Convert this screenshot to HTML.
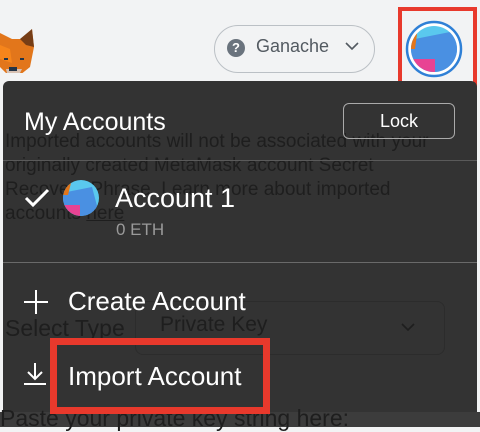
<!DOCTYPE html>
<html><head><style>
body{margin:0;width:480px;height:427px;overflow:hidden;background:#f2f3f4;font-family:"Liberation Sans",sans-serif;position:relative}
.a{position:absolute;white-space:nowrap}
.bg{color:#1e1e1e;font-size:19px}
.w{color:#fff}
</style></head><body>
<svg class="a" style="left:0;top:25px" width="36" height="48" viewBox="0 0 36 48">
<polygon points="0,8 12,14 24,14 32,4 34,22 30,42 20,50 8,50 0,42" fill="#e2761b"/>
<polygon points="20,14 32,4 34,22 26,20" fill="#763d16"/>
<polygon points="0,20 10,24 12,38 0,34" fill="#f6851b"/>
<polygon points="6,44 22,44 18,52 8,52" fill="#d7c1b3"/>
<rect x="9" y="42" width="8" height="4" fill="#233447"/>
<rect x="4" y="33" width="4" height="2" fill="#233447"/>
<rect x="20" y="33" width="4" height="2" fill="#233447"/>
</svg>
<div class="a" style="left:214px;top:25px;width:159px;height:46px;border:1px solid #bbc0c5;border-radius:24px;"></div>
<div class="a" style="left:227px;top:39px;width:18px;height:18px;border-radius:50%;background:#6a737d;color:#fff;font-size:13px;font-weight:bold;text-align:center;line-height:18px">?</div>
<div class="a" style="left:256px;top:36px;font-size:18px;color:#535a61">Ganache</div>
<svg class="a" style="left:345px;top:42px" width="14" height="9"><path d="M1 1 L7 7 L13 1" stroke="#535a61" stroke-width="1.6" fill="none"/></svg>
<div class="a" style="left:398px;top:7px;width:71px;height:73px;border:4px solid #e8392c"></div>
<svg class="a" style="left:405px;top:19px" width="60" height="60" viewBox="0 0 60 60">
<circle cx="29" cy="30" r="27" fill="#fff" stroke="#2f80d6" stroke-width="2.5"/>
<clipPath id="c1"><circle cx="29" cy="30" r="23"/></clipPath>
<g clip-path="url(#c1)"><rect x="0" y="0" width="60" height="60" fill="#5ac8ee"/>
<polygon points="0,22 50,12 60,60 0,60" fill="#4a90e2"/>
<polygon points="0,40 30,40 30,60 0,60" fill="#e84393"/>
<polygon points="0,10 14,0 10,30 0,30" fill="#e2761b"/></g>
</svg>
<div class="a" style="left:3px;top:81px;width:474px;height:331px;background:#333;border-radius:6px 6px 0 0"></div>
<div class="a" style="left:0;top:412px;width:480px;height:15px;background:#3c3c3c"></div>
<div class="a bg" style="left:5px;top:131px">Imported accounts will not be associated with your</div>
<div class="a bg" style="left:5px;top:155px">originally created MetaMask account Secret</div>
<div class="a bg" style="left:5px;top:179px">Recovery Phrase. Learn more about imported</div>
<div class="a bg" style="left:5px;top:203px">accounts <u>here</u></div>
<div class="a bg" style="left:5px;top:315px;font-size:23px">Select Type</div>
<div class="a" style="left:135px;top:301px;width:308px;height:52px;border:1px solid #2c2c2c;border-radius:8px"></div>
<div class="a bg" style="left:160px;top:313px;font-size:21px">Private Key</div>
<svg class="a" style="left:401px;top:323px" width="14" height="9"><path d="M1 1 L7 7 L13 1" stroke="#1e1e1e" stroke-width="1.6" fill="none"/></svg>
<div class="a bg" style="left:0;top:405px;font-size:23px">Paste your private key string here:</div>
<div class="a" style="left:3px;top:160px;width:474px;height:1px;background:#5a5a5a"></div>
<div class="a" style="left:3px;top:262px;width:474px;height:1px;background:#6a6a6a"></div>
<div class="a w" style="left:24px;top:108px;font-size:25px">My Accounts</div>
<div class="a" style="left:343px;top:103px;width:110px;height:34px;border:1px solid #aaa;border-radius:6px;color:#fff;font-size:18px;text-align:center;line-height:34px">Lock</div>
<svg class="a" style="left:24px;top:188px" width="26" height="20"><path d="M2 10 L9 17 L24 2" stroke="#fff" stroke-width="3" fill="none"/></svg>
<svg class="a" style="left:62px;top:179px" width="38" height="38" viewBox="0 0 38 38">
<clipPath id="c2"><circle cx="19" cy="19" r="18"/></clipPath>
<g clip-path="url(#c2)"><rect width="38" height="38" fill="#5ac8ee"/>
<polygon points="0,14 30,8 38,38 0,38" fill="#4a90e2"/>
<polygon points="0,26 18,26 18,38 0,38" fill="#e84393"/>
<polygon points="0,6 10,0 6,16 0,16" fill="#e2761b"/></g></svg>
<div class="a w" style="left:115px;top:183px;font-size:27px">Account 1</div>
<div class="a" style="left:116px;top:220px;font-size:17px;color:#9a9a9a">0 ETH</div>
<svg class="a" style="left:23px;top:289px" width="26" height="26"><path d="M13 1 V25 M1 13 H25" stroke="#fff" stroke-width="2"/></svg>
<div class="a w" style="left:68px;top:286px;font-size:26px">Create Account</div>
<svg class="a" style="left:23px;top:362px" width="24" height="24"><path d="M12 1 V17 M5 10 L12 17 L19 10 M1 22 H23" stroke="#fff" stroke-width="2" fill="none"/></svg>
<div class="a w" style="left:68px;top:361px;font-size:26px">Import Account</div>
<div class="a" style="left:50px;top:338px;width:206px;height:62px;border:7px solid #e8392c"></div>
</body></html>
